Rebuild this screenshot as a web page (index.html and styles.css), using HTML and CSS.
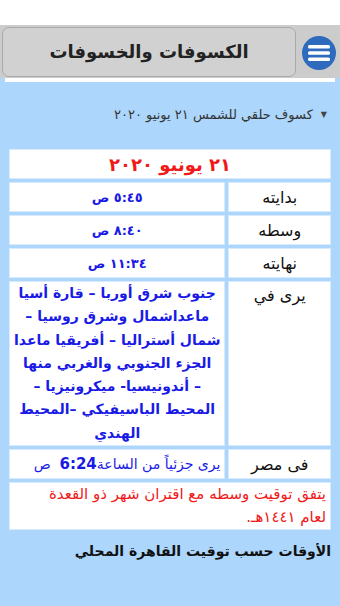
FILE: index.html
```html
<!DOCTYPE html>
<html lang="ar" dir="rtl">
<head>
  <meta charset="UTF-8" />
  <meta name="viewport" content="width=device-width, initial-scale=1.0" />
  <title>الكسوفات والخسوفات</title>
  <link rel="stylesheet" href="styles.css">
</head>
<body>

  <div class="topbar">
    <div class="menu-btn">
      <svg width="36" height="36" viewBox="0 0 36 36">
        <circle cx="18" cy="18" r="17" fill="#2f6bbd" />
        <rect x="7" y="10" width="22" height="3.5" rx="1.5" fill="#fff" />
        <rect x="7" y="16.3" width="22" height="3.5" rx="1.5" fill="#fff" />
        <rect x="7" y="22.6" width="22" height="3.5" rx="1.5" fill="#fff" />
      </svg>
    </div>
    <div class="title">الكسوفات والخسوفات</div>
  </div>

  <div class="content">
    <div class="strip"></div>

    <!-- اختيار الحدث -->
    <div class="picker">
      <span class="arrow">&#9660;</span>
      <span>كسوف حلقي للشمس ٢١ يونيو ٢٠٢٠</span>
    </div>

    <table class="info">
      <tr>
        <td colspan="2" class="date">٢١ يونيو ٢٠٢٠</td>
      </tr>
      <tr>
        <td class="label">بدايته</td>
        <td class="value time">٥:٤٥ ص</td>
      </tr>
      <tr>
        <td class="label">وسطه</td>
        <td class="value time">٨:٤٠ ص</td>
      </tr>
      <tr>
        <td class="label">نهايته</td>
        <td class="value time">١١:٣٤ ص</td>
      </tr>
      <tr>
        <td class="label top">يرى في</td>
        <td class="value places">جنوب شرق أوربا – قارة أسيا<br>ماعداشمال وشرق روسيا –<br>شمال أستراليا – أفريقيا ماعدا<br>الجزء الجنوبي والغربي منها<br>– أندونيسيا- ميكرونيزيا –<br>المحيط الباسيفيكي –المحيط<br>الهندي</td>
      </tr>
      <tr>
        <td class="label">فى مصر</td>
        <td class="value egypt">يرى جزئياً من الساعة<b>6:24</b>&nbsp; ص</td>
      </tr>
      <tr>
        <td colspan="2" class="note">يتفق توقيت وسطه مع اقتران شهر ذو القعدة<br>لعام ١٤٤١هـ.</td>
      </tr>
    </table>

    <p class="footer">الأوقات حسب توقيت القاهرة المحلي</p>
  </div>

</body>
</html>
```

FILE: styles.css
```css
html, body {
  margin: 0;
  height: 100%;
}

body {
  font-family: "DejaVu Sans", sans-serif;
  background: #fff;
  padding-top: 25px;
  box-sizing: border-box;
}

.topbar {
  display: flex;
  align-items: center;
  gap: 5px;
  height: 53px;
  padding: 0 3px 0 2px;
  background: #cccccc;
}

.menu-btn {
  display: flex;
  padding-top: 2px;
}

.title {
  flex: 1;
  height: 48px;
  display: flex;
  align-items: center;
  justify-content: center;
  background: #d1d1d1;
  border: 1px solid #a9a9a9;
  border-radius: 7px;
  font-size: 18px;
  font-weight: bold;
  color: #222;
}

.content {
  background: #acd6fb;
  min-height: calc(100% - 53px);
  padding: 0 5px;
  overflow: hidden;
}

.strip {
  height: 4px;
  background: #fff;
}

.picker {
  display: flex;
  align-items: center;
  gap: 8px;
  padding: 21px 8px 0 0;
  height: 22px;
  font-size: 13px;
  color: #333;
}

.picker .arrow {
  font-size: 8px;
  color: #444;
}

.info {
  width: calc(100% - 2px);
  margin: 21px 1px 0;
  border-spacing: 3px;
  background: #acd6fb;
}

.info td {
  background: #fff;
  border: 1px solid #d8ebfc;
  padding: 0 4px;
}

.date {
  height: 28px;
  text-align: center;
  color: #f01818;
  font-size: 18px;
  font-weight: bold;
}

.label {
  width: 95px;
  height: 28px;
  text-align: center;
  font-size: 16px;
  color: #111;
}

.label.top {
  vertical-align: top;
  padding-top: 4px;
}

.value {
  color: #1a1ae6;
}

.time {
  text-align: center;
  font-size: 13px;
  font-weight: bold;
}

.places {
  text-align: center;
  font-size: 14px;
  font-weight: bold;
  line-height: 23.3px;
  padding: 2px 2px 2px;
  white-space: nowrap;
}

.egypt {
  font-size: 14px;
  white-space: nowrap;
  padding: 0 2px;
}

.egypt b {
  font-size: 15px;
}

.note {
  height: 44px;
  color: #f01818;
  font-size: 15px;
  line-height: 23px;
  padding: 1px 3px;
  vertical-align: top;
}

.footer {
  margin: 10px 4px 0;
  font-size: 14px;
  font-weight: bold;
  color: #111;
}
```
